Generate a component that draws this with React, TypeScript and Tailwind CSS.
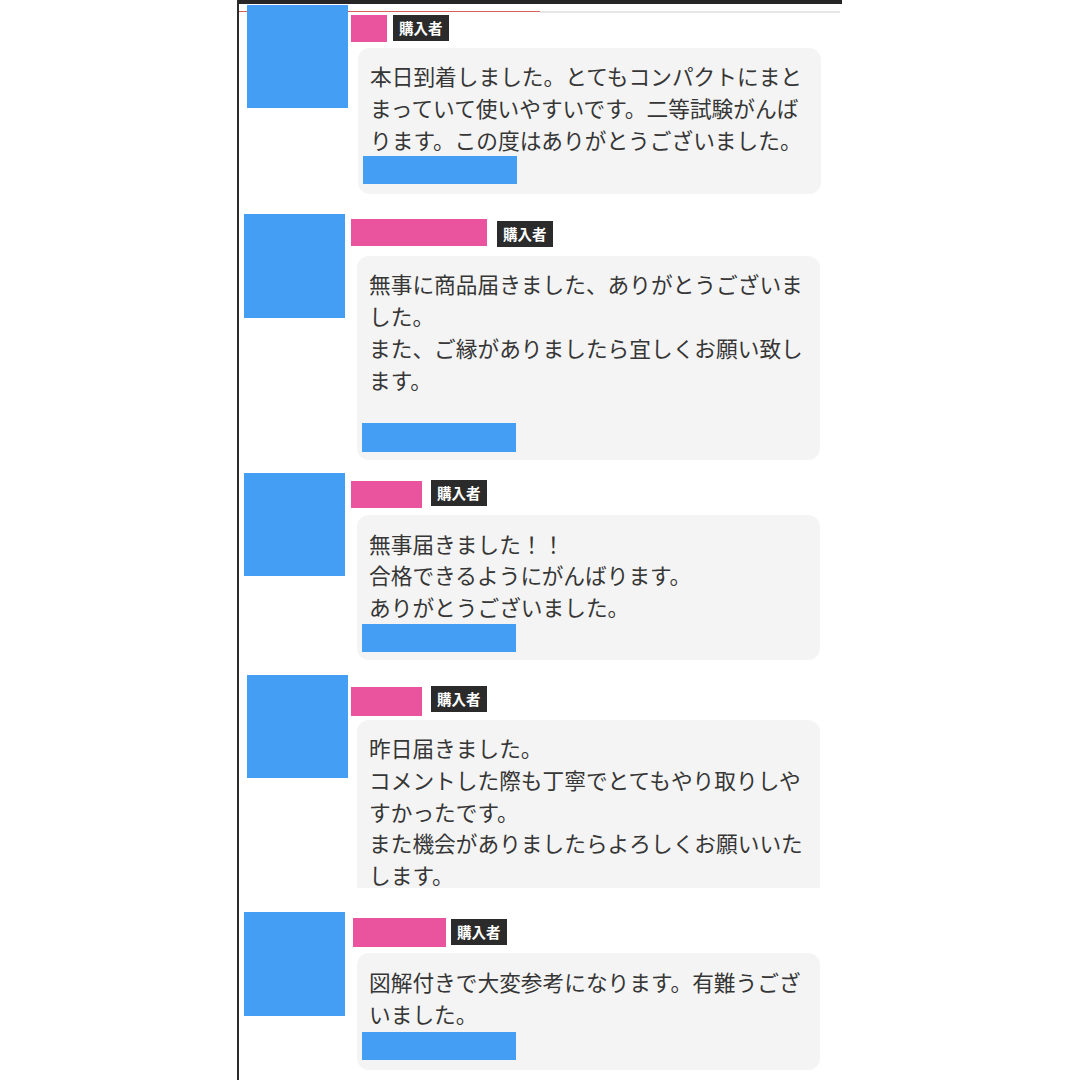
const reviews = [
  {
    wrap: 'pt-[5px]',
    avatar: 'ml-[8px] mt-0 w-[101px] h-[103px]',
    head: 'mt-[10px] ml-0 gap-[6px]',
    pink: 'w-[36px] h-[27px]',
    badge: 'mt-0',
    bubble: 'mt-[6px] ml-[7px] pt-[12px] pb-[10px] rounded-[12px]',
    lines: [
      '本日到着しました。とてもコンパクトにまと',
      'まっていて使いやすいです。二等試験がんば',
      'ります。この度はありがとうございました。',
    ],
    bar: 'mt-[1px] h-[28px]',
  },
  {
    wrap: 'pt-[20px]',
    avatar: 'ml-[5px] mt-0 w-[101px] h-[104px]',
    head: 'mt-[5px] ml-[3px] gap-[10px]',
    pink: 'w-[136px] h-[27px]',
    badge: 'mt-[2px]',
    bubble: 'mt-[9px] ml-[9px] pt-[12px] pb-[8px] rounded-[12px]',
    lines: [
      '無事に商品届きました、ありがとうございま',
      'した。',
      'また、ご縁がありましたら宜しくお願い致し',
      'ます。',
    ],
    bar: 'mt-[27px] h-[29px]',
  },
  {
    wrap: 'pt-[13px]',
    avatar: 'ml-[5px] mt-0 w-[101px] h-[103px]',
    head: 'mt-[8px] ml-[3px] gap-[9px]',
    pink: 'w-[71px] h-[27px]',
    badge: '-mt-[1px]',
    bubble: 'mt-[7px] ml-[9px] pt-[13px] pb-[8px] rounded-[12px]',
    lines: [
      '無事届きました！！',
      '合格できるようにがんばります。',
      'ありがとうございました。',
    ],
    bar: 'mt-[1px] h-[28px]',
  },
  {
    wrap: 'pt-[15px]',
    avatar: 'ml-[8px] mt-0 w-[101px] h-[103px]',
    head: 'mt-[12px] ml-0 gap-[9px]',
    pink: 'w-[71px] h-[29px]',
    badge: '-mt-[1px]',
    bubble: 'mt-[4px] ml-[6px] pt-[12px] h-[168px] rounded-t-[12px] overflow-hidden',
    lines: [
      '昨日届きました。',
      'コメントした際も丁寧でとてもやり取りしや',
      'すかったです。',
      'また機会がありましたらよろしくお願いいた',
      'します。',
    ],
    bar: '',
  },
  {
    wrap: 'pt-[24px]',
    avatar: 'ml-[5px] mt-0 w-[101px] h-[104px]',
    head: 'mt-[6px] ml-[5px] gap-[5px]',
    pink: 'w-[93px] h-[29px]',
    badge: 'mt-[1px]',
    bubble: 'mt-[6px] ml-[9px] pt-[13px] pb-[10px] rounded-[12px]',
    lines: [
      '図解付きで大変参考になります。有難うござ',
      'いました。',
    ],
    bar: 'mt-[2px] h-[28px]',
  },
];

function Review({ r }: { r: (typeof reviews)[number] }) {
  return (
    <div className={`flex items-start ${r.wrap}`}>
      <div className={`shrink-0 bg-[#449ef3] ${r.avatar}`} />
      <div className="ml-[3px] flex flex-col">
        <div className={`flex items-start ${r.head}`}>
          <div className={`bg-[#ea539d] ${r.pink}`} />
          <span
            className={`h-[26px] px-[6px] bg-[#2b2b2b] text-white text-[14.5px] font-bold leading-[26px] ${r.badge}`}
          >
            購入者
          </span>
        </div>
        <div className={`w-[463px] bg-[#f4f4f4] pl-[5px] ${r.bubble}`}>
          <div className="pl-[7px] text-[21.7px] leading-[31.8px] text-[#363636] whitespace-nowrap">
            {r.lines.map((l, i) => (
              <div key={i}>{l}</div>
            ))}
          </div>
          {r.bar && <div className={`w-[154px] bg-[#449ef3] ${r.bar}`} />}
        </div>
      </div>
    </div>
  );
}

export default function App() {
  return (
    <div
      className="w-[1080px] h-[1080px] bg-white overflow-hidden"
      style={{ fontFamily: '"Noto Sans CJK JP", "Noto Sans", sans-serif' }}
    >
      <div className="relative ml-[237px] w-[605px] h-full border-l-2 border-[#2b2b2b]">
        {/* top chrome, sits under the first avatar */}
        <div className="absolute left-0 top-0 w-full h-[4px] bg-[#262626]" />
        <div className="absolute left-0 top-[11px] w-[301px] h-[1px] bg-[#d8605c]" />
        <div className="absolute left-[301px] top-[11px] w-[300px] h-[2px] bg-[#e6e6e6]" />

        <div className="relative flex flex-col">
          {reviews.map((r, i) => (
            <Review key={i} r={r} />
          ))}
        </div>
      </div>
    </div>
  );
}
